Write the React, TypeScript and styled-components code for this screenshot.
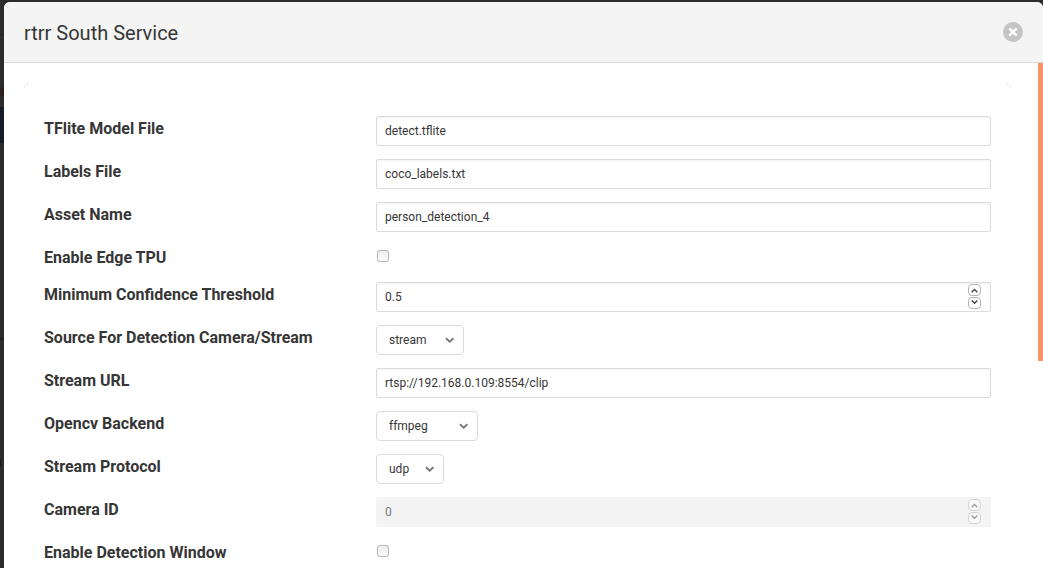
import React from 'react';
import styled, { createGlobalStyle } from 'styled-components';

const GlobalStyle = createGlobalStyle`
  *, *::before, *::after { box-sizing: border-box; }
  html, body { margin: 0; padding: 0; overflow: hidden; background: #2d2b2b; }
  body { font-family: Roboto, "Liberation Sans", sans-serif; color: #363636; font-size: 16px; line-height: 24px; }
`;

const Page = styled.div`
  position: relative;
  height: 568px;
  padding: 2px 0 0 4px;
  background: #2d2b2b;
  overflow: hidden;
`;

const Card = styled.section`
  position: relative;
  height: 100%;
  display: flex;
  flex-direction: column;
  border-radius: 6px 6px 0 0;
  background: #fff;
  overflow: hidden;
`;

const CardHead = styled.header`
  flex: none;
  height: 61px;
  padding: 0 20px;
  display: flex;
  align-items: center;
  justify-content: space-between;
  background: #f4f4f4;
  border-bottom: 1px solid #dbdbdb;
`;

const Title = styled.h1`
  margin: 0;
  padding-top: 2px;
  font-size: 20px;
  font-weight: 400;
  line-height: 20px;
  color: #363636;
`;

const CloseButton = styled.button`
  width: 20px;
  height: 20px;
  padding: 0;
  border: 0;
  border-radius: 50%;
  display: flex;
  background: #c4c4c4;
`;

const CardBody = styled.div`
  flex: 1;
  min-height: 0;
  display: flex;
  justify-content: space-between;
`;

const Panel = styled.div`
  width: 987px;
  margin: 20px 0 0 20px;
  padding: 33px 20px 0;
  position: relative;
`;

const PanelCorner = styled.svg<{ $right?: boolean }>`
  position: absolute;
  top: 0;
  ${(p) => (p.$right ? 'right: 0; transform: scaleX(-1);' : 'left: 0;')}
`;

const Scrollbar = styled.div`
  width: 5px;
  height: 298px;
  background: #f5936b;
`;

const Form = styled.form`
  display: flex;
  flex-direction: column;
  gap: 13px;
`;

const Row = styled.div`
  display: grid;
  grid-template-columns: 332px 615px;
  align-items: start;
`;

const Label = styled.label`
  height: 24px;
  font-weight: 700;
  line-height: 26px;
`;

const Field = styled.div<{ $disabled?: boolean }>`
  height: 30px;
  padding: 0 8px;
  display: flex;
  align-items: center;
  justify-content: space-between;
  border: 1px solid ${(p) => (p.$disabled ? '#f4f4f4' : '#dbdbdb')};
  border-radius: 2px;
  background: ${(p) => (p.$disabled ? '#f4f4f4' : '#fff')};
  box-shadow: ${(p) => (p.$disabled ? 'none' : 'inset 0 1px 2px rgba(10, 10, 10, 0.05)')};
  color: ${(p) => (p.$disabled ? '#7a7a7a' : '#363636')};
  font-size: 12px;
  line-height: 18px;
`;

const Stepper = styled.div<{ $disabled?: boolean }>`
  display: flex;
  flex-direction: column;
  gap: 1px;
  margin: 0 1px 2px 0;
  opacity: ${(p) => (p.$disabled ? 0.5 : 1)};
`;

const StepButton = styled.span`
  width: 13px;
  height: 12px;
  display: flex;
  border: 1px solid #b4b4b4;
  border-radius: 4px;
  background: #fff;
`;

const Select = styled.div<{ $width: number }>`
  width: ${(p) => p.$width}px;
  height: 30px;
  padding: 0 8px 0 12px;
  display: flex;
  align-items: center;
  justify-content: space-between;
  border: 1px solid #dbdbdb;
  border-radius: 4px;
  font-size: 12px;
  line-height: 18px;
`;

const CheckboxCell = styled.div`
  height: 24px;
  padding: 5px 0 0 1px;
`;

const Checkbox = styled.span`
  display: block;
  width: 12px;
  height: 12px;
  border: 1px solid #b8b8b8;
  border-radius: 3px;
  background: linear-gradient(#ededed, #fcfcfc);
  box-shadow: 0 0 1px rgba(0, 0, 0, 0.25);
`;

const Backdrop = styled.div`
  position: absolute;
  left: 0;
  top: 0;
  width: 4px;
  height: 100%;
  overflow: hidden;
`;

const BackdropMark = styled.div<{ $top: number; $height: number; $color: string; $left?: number }>`
  position: absolute;
  left: ${(p) => p.$left ?? 0}px;
  top: ${(p) => p.$top}px;
  width: 4px;
  height: ${(p) => p.$height}px;
  background: ${(p) => p.$color};
`;

type Item =
  | { kind: 'text'; label: string; value: string }
  | { kind: 'number'; label: string; value: string; disabled?: boolean }
  | { kind: 'select'; label: string; value: string; width: number }
  | { kind: 'check'; label: string };

const items: Item[] = [
  { kind: 'text', label: 'TFlite Model File', value: 'detect.tflite' },
  { kind: 'text', label: 'Labels File', value: 'coco_labels.txt' },
  { kind: 'text', label: 'Asset Name', value: 'person_detection_4' },
  { kind: 'check', label: 'Enable Edge TPU' },
  { kind: 'number', label: 'Minimum Confidence Threshold', value: '0.5' },
  { kind: 'select', label: 'Source For Detection Camera/Stream', value: 'stream', width: 88 },
  { kind: 'text', label: 'Stream URL', value: 'rtsp://192.168.0.109:8554/clip' },
  { kind: 'select', label: 'Opencv Backend', value: 'ffmpeg', width: 102 },
  { kind: 'select', label: 'Stream Protocol', value: 'udp', width: 68 },
  { kind: 'number', label: 'Camera ID', value: '0', disabled: true },
  { kind: 'check', label: 'Enable Detection Window' },
];

const StepArrow = ({ down }: { down?: boolean }) => (
  <StepButton>
    <svg width="11" height="10" viewBox="0 0 11 10" fill="none" stroke="#444" strokeWidth="1.4">
      <path d={down ? 'M2.7 2.5L5.5 5.3L8.3 2.5' : 'M2.7 7.3L5.5 4.5L8.3 7.3'} />
    </svg>
  </StepButton>
);

function Control({ item }: { item: Item }) {
  switch (item.kind) {
    case 'text':
      return <Field>{item.value}</Field>;
    case 'number':
      return (
        <Field $disabled={item.disabled}>
          {item.value}
          <Stepper $disabled={item.disabled}>
            <StepArrow />
            <StepArrow down />
          </Stepper>
        </Field>
      );
    case 'select':
      return (
        <Select $width={item.width}>
          {item.value}
          <svg width="10" height="8" viewBox="0 0 10 8" fill="none" stroke="#7a7a7a" strokeWidth="2">
            <path d="M1 2.2L4.7 5.7L8.4 2.2" />
          </svg>
        </Select>
      );
    case 'check':
      return (
        <CheckboxCell>
          <Checkbox />
        </CheckboxCell>
      );
  }
}

const Corner = ({ right }: { right?: boolean }) => (
  <PanelCorner $right={right} width="5" height="5" viewBox="0 0 5 5" fill="none" stroke="#dbdbdb">
    <path d="M0.5 4.5A4 4 0 0 1 4.5 0.5" strokeDasharray="1.6 0.8" />
  </PanelCorner>
);

export default function App() {
  return (
    <Page>
      <GlobalStyle />
      <Backdrop>
        <BackdropMark $top={34} $height={1} $color="#252323" />
        <BackdropMark $top={88} $height={7} $color="#1c2330" $left={-3} />
        <BackdropMark $top={87} $height={9} $color="#33190f" $left={2} />
        <BackdropMark $top={107} $height={36} $color="#131b29" />
        <BackdropMark $top={338} $height={2} $color="#1c2025" $left={-1} />
        <BackdropMark $top={459} $height={7} $color="#1c1b1b" $left={-3} />
      </Backdrop>
      <Card>
        <CardHead>
          <Title>rtrr South Service</Title>
          <CloseButton aria-label="close">
            <svg width="20" height="20" viewBox="0 0 20 20" stroke="#fff" strokeWidth="2.4">
              <path d="M6.3 6.3L13.7 13.7M13.7 6.3L6.3 13.7" />
            </svg>
          </CloseButton>
        </CardHead>
        <CardBody>
          <Panel>
            <Corner />
            <Corner right />
            <Form>
              {items.map((item) => (
                <Row key={item.label}>
                  <Label>{item.label}</Label>
                  <Control item={item} />
                </Row>
              ))}
            </Form>
          </Panel>
          <Scrollbar />
        </CardBody>
      </Card>
    </Page>
  );
}
